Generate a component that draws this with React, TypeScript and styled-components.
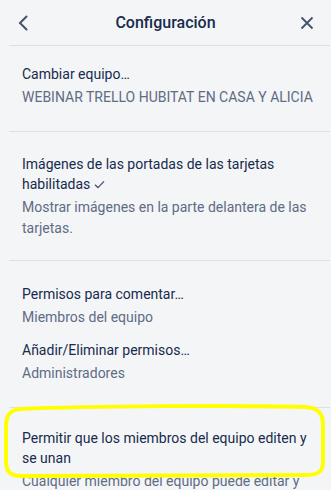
import React from "react";
import styled, { createGlobalStyle } from "styled-components";

const Global = createGlobalStyle`
  html, body { margin: 0; padding: 0; background: #f4f5f7; }
  body { font-family: Roboto, "Segoe UI", "Noto Sans", sans-serif; color: #172b4d; }
`;

const Panel = styled.div`
  position: relative;
  width: 331px;
  height: 490px;
  overflow: hidden;
  background: #f4f5f7;
`;

const Header = styled.header`
  height: 45px;
  display: grid;
  grid-template-columns: 48px 1fr 48px;
  align-items: center;
`;

const IconButton = styled.button`
  border: 0;
  background: transparent;
  padding: 0;
  height: 45px;
  display: flex;
  align-items: center;
  justify-content: center;
  color: #42526e;
  cursor: pointer;
`;

const Title = styled.h2`
  margin: 0;
  text-align: center;
  font-size: 16px;
  font-weight: 500;
  color: #172b4d;
  line-height: 20px;
`;

const Divider = styled.hr`
  border: 0;
  height: 1px;
  background: #dcdfe4;
  margin: 0 1px 0 9px;
`;

const Section = styled.section<{ $top: number; $bottom: number }>`
  display: flex;
  flex-direction: column;
  gap: 12px;
  padding: ${(p) => p.$top}px 12px ${(p) => p.$bottom}px 22px;
`;

const Item = styled.div`
  display: flex;
  flex-direction: column;
  gap: 3px;
`;

const ItemTitle = styled.div`
  font-size: 14px;
  line-height: 20px;
  color: #172b4d;
`;

const ItemSub = styled.div`
  font-size: 14px;
  line-height: 21px;
  color: #5e6c84;
`;

const Highlight = styled.svg`
  position: absolute;
  left: 0;
  top: 402px;
  pointer-events: none;
`;

const Check = () => (
  <svg width="11" height="9" viewBox="0 0 11 9" style={{ marginLeft: 4 }}>
    <path d="M1 4.8 L4 7.6 L10 1.4" fill="none" stroke="#42526e" strokeWidth="1.3" />
  </svg>
);

export default function App() {
  return (
    <Panel>
      <Global />
      <Header>
        <IconButton aria-label="Volver">
          <svg width="12" height="16" viewBox="0 0 12 16">
            <path d="M8.5 1.5 L2 8 L8.5 14.5" fill="none" stroke="#42526e" strokeWidth="2" strokeLinecap="round" />
          </svg>
        </IconButton>
        <Title>Configuración</Title>
        <IconButton aria-label="Cerrar">
          <svg width="14" height="14" viewBox="0 0 14 14">
            <path d="M1.5 1.5 L12.5 12.5 M12.5 1.5 L1.5 12.5" fill="none" stroke="#42526e" strokeWidth="1.8" />
          </svg>
        </IconButton>
      </Header>
      <Divider />
      <Section $top={18} $bottom={23}>
        <Item>
          <ItemTitle>Cambiar equipo…</ItemTitle>
          <ItemSub>WEBINAR TRELLO HUBITAT EN CASA Y ALICIA</ItemSub>
        </Item>
      </Section>
      <Divider />
      <Section $top={22} $bottom={21}>
        <Item>
          <ItemTitle>
            Imágenes de las portadas de las tarjetas habilitadas
            <Check />
          </ItemTitle>
          <ItemSub>Mostrar imágenes en la parte delantera de las tarjetas.</ItemSub>
        </Item>
      </Section>
      <Divider />
      <Section $top={23} $bottom={23}>
        <Item>
          <ItemTitle>Permisos para comentar…</ItemTitle>
          <ItemSub>Miembros del equipo</ItemSub>
        </Item>
        <Item>
          <ItemTitle>Añadir/Eliminar permisos…</ItemTitle>
          <ItemSub>Administradores</ItemSub>
        </Item>
      </Section>
      <Divider />
      <Section $top={20} $bottom={20}>
        <Item>
          <ItemTitle>Permitir que los miembros del equipo editen y se unan</ItemTitle>
          <ItemSub>Cualquier miembro del equipo puede editar y unirse a este tablero.</ItemSub>
        </Item>
      </Section>
      <Highlight width="331" height="80" viewBox="0 0 331 80">
        <path
          d="M20 7 C90 4 240 3 306 5 C318 6 323 11 323 23 L323 60 C323 70 318 73 306 73 L22 74 C10 74 6 70 6 58 L6 24 C6 13 10 8 20 7 Z"
          fill="none"
          stroke="#ffff00"
          strokeWidth="4"
        />
      </Highlight>
    </Panel>
  );
}
